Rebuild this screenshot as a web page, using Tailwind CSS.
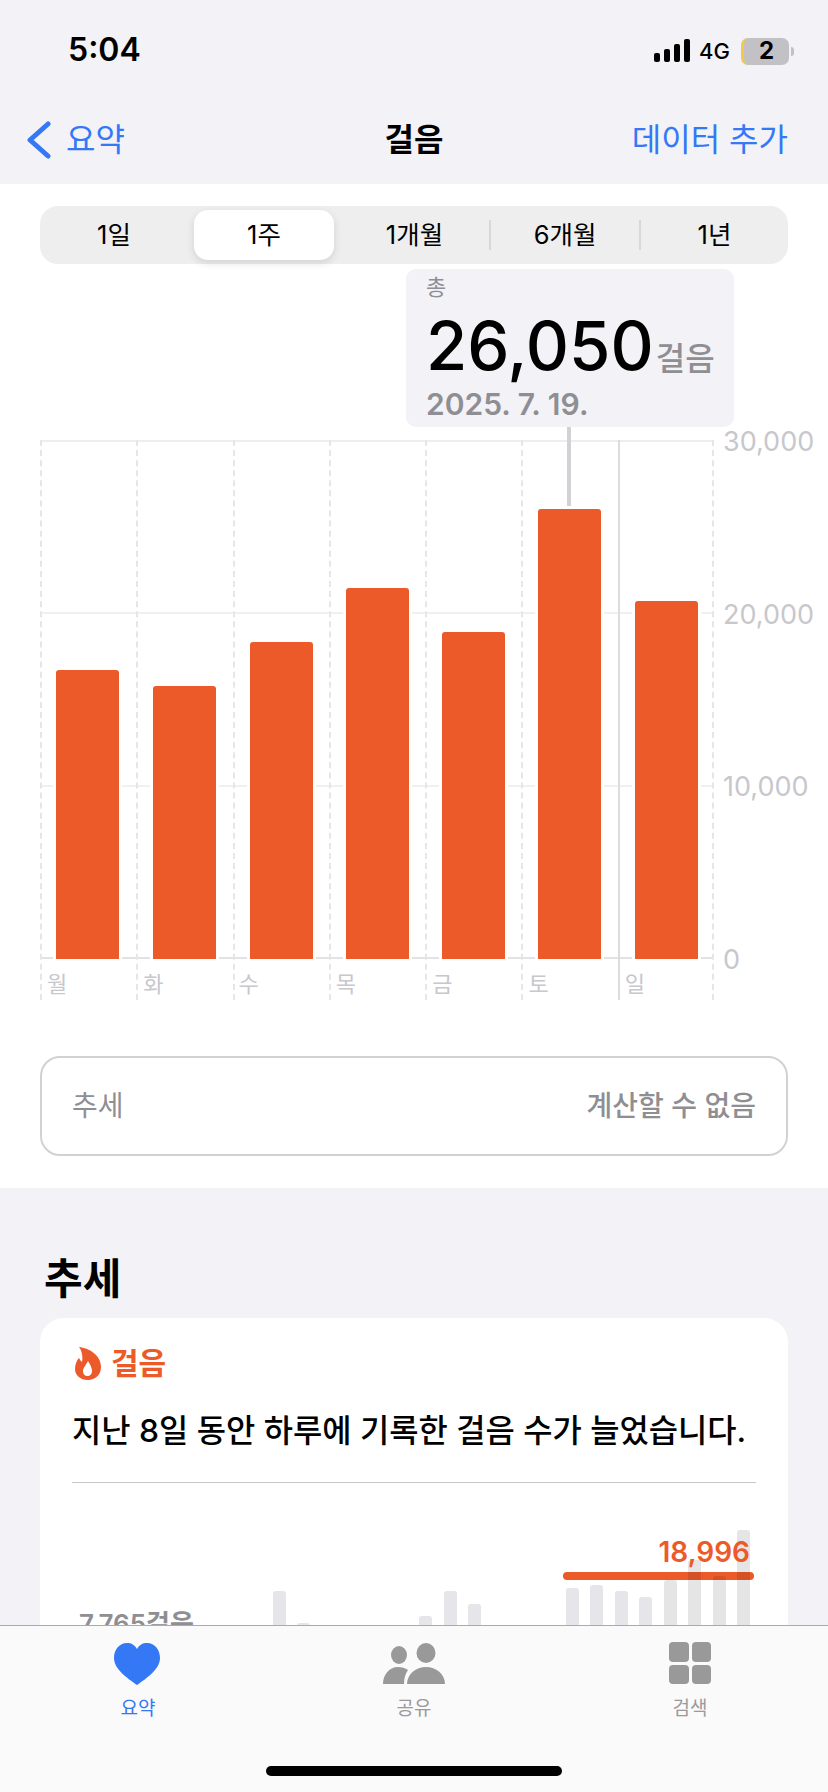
<!DOCTYPE html>
<html lang="ko">
<head>
    <meta charset="utf-8"/>
    <title>걸음</title>
    <script src="https://cdn.jsdelivr.net/npm/@tailwindcss/browser@4"></script>
</head>
<body class="bg-[#f2f2f7]">
<div class="relative w-[828px] h-[1792px] overflow-hidden bg-[#f2f2f7] text-black font-['Inter','Noto_Sans_CJK_KR',sans-serif]">

    <!-- status bar -->
    <div class="h-[100px] pt-[28px] pl-[68px] pr-[34px] flex justify-between items-start">
        <span class="text-[32px] leading-[44px] font-semibold">5:04</span>
        <div class="flex items-center h-[44px] mt-[1px]">
            <svg class="w-[38px] h-[24px]" viewBox="0 0 38 24" fill="#000">
                <rect x="1" y="14" width="6" height="9" rx="2"/>
                <rect x="11" y="10" width="6" height="13" rx="2"/>
                <rect x="21" y="5" width="6" height="18" rx="2"/>
                <rect x="31" y="0" width="6" height="23" rx="2"/>
            </svg>
            <span class="ml-[8px] text-[22px] font-medium leading-none">4G</span>
            <div class="ml-[11px] w-[48px] h-[27px] rounded-[7px] bg-[#c2c1c6] border-l-[3px] border-[#f4c94a] flex items-center justify-center text-[24px] font-bold leading-none">2</div>
            <div class="ml-[2px] w-[3px] h-[9px] rounded-r-full bg-[#c2c1c6]"></div>
        </div>
    </div>

    <!-- nav bar -->
    <div class="h-[84px] pl-[26px] pr-[40px] flex items-start justify-between relative">
        <div class="flex items-center h-[80px] text-[#3478f6]">
            <svg class="w-[25px] h-[38px]" viewBox="0 0 25 38" fill="none" stroke="#3478f6" stroke-width="5" stroke-linecap="round" stroke-linejoin="round">
                <path d="M22 3 L4 19 L22 35"/>
            </svg>
            <span class="ml-[15px] text-[32px] leading-none">요약</span>
        </div>
        <span class="absolute left-0 right-0 top-0 h-[80px] flex items-center justify-center text-[32px] font-semibold leading-none">걸음</span>
        <span class="h-[80px] flex items-center text-[32px] leading-none text-[#3478f6]">데이터 추가</span>
    </div>

    <!-- chart section -->
    <div class="h-[1004px] bg-white pt-[22px] px-[40px]">
        <div class="h-[58px] w-[748px] rounded-[18px] bg-[#eeeeef] text-[25.5px] relative">
            <span class="absolute left-0 top-0 h-full w-[148px] flex items-center justify-center">1일</span>
            <div class="absolute left-[154px] top-[4px] w-[140px] h-[50px] rounded-[14px] bg-white shadow-[0_3px_8px_rgba(0,0,0,0.12)] flex items-center justify-center">1주</div>
            <span class="absolute left-[300px] top-0 h-full w-[149px] flex items-center justify-center">1개월</span>
            <div class="absolute left-[449px] top-[14px] w-[2px] h-[30px] bg-[#d8d8da]"></div>
            <span class="absolute left-[451px] top-0 h-full w-[148px] flex items-center justify-center">6개월</span>
            <div class="absolute left-[599px] top-[14px] w-[2px] h-[30px] bg-[#d8d8da]"></div>
            <span class="absolute left-[600px] top-0 h-full w-[149px] flex items-center justify-center">1년</span>
        </div>

        <!-- chart -->
        <div class="relative h-[735px] mt-[5px]">
            <!-- tooltip -->
            <div class="absolute left-[366px] top-0 w-[328px] h-[158px] rounded-[10px] bg-[#f2f2f7] pl-[20px] z-10">
                <div class="text-[22px] leading-[22px] pt-[7px] text-[#8e8e93]">총</div>
                <div class="flex items-baseline mt-[13px] h-[70px]">
                    <span class="text-[67px] leading-[70px] font-medium">26,050</span>
                    <span class="text-[32px] font-medium leading-none text-[#8e8e93] ml-[2px]">걸음</span>
                </div>
                <div class="text-[30px] leading-[34px] mt-[6px] font-semibold text-[#8e8e93]">2025. 7. 19.</div>
            </div>
            <div class="absolute left-[527px] top-[158px] w-[4px] h-[79px] bg-[#d1d1d6] z-10"></div>

            <!-- grid lines -->
            <div class="absolute left-0 top-[171px] w-[673px] h-[519px] flex flex-col justify-between">
                <div class="h-[2px] bg-[#eeeeef]"></div>
                <div class="h-[2px] bg-[#f0f0f1]"></div>
                <div class="h-[2px] bg-[#f0f0f1]"></div>
                <div class="h-[2px] bg-[#e2e2e4]"></div>
            </div>

            <!-- columns -->
            <div class="absolute left-0 top-[171px] w-[674px] h-[560px] grid grid-cols-7">
                <div class="relative border-l-2 border-dashed border-[#e6e6e8]">
                    <div class="absolute left-[14px] bottom-[41px] w-[63px] h-[289px] bg-[#ec5a2a] rounded-t-[3px] shadow-[-3px_0_0_#fff,3px_0_0_#fff]"></div>
                    <span class="absolute left-[5px] bottom-0 text-[22px] leading-[32px] text-[#c7c7cc]">월</span>
                </div>
                <div class="relative border-l-2 border-dashed border-[#e6e6e8]">
                    <div class="absolute left-[15px] bottom-[41px] w-[63px] h-[273px] bg-[#ec5a2a] rounded-t-[3px] shadow-[-3px_0_0_#fff,3px_0_0_#fff]"></div>
                    <span class="absolute left-[5px] bottom-0 text-[22px] leading-[32px] text-[#c7c7cc]">화</span>
                </div>
                <div class="relative border-l-2 border-dashed border-[#e6e6e8]">
                    <div class="absolute left-[15px] bottom-[41px] w-[63px] h-[317px] bg-[#ec5a2a] rounded-t-[3px] shadow-[-3px_0_0_#fff,3px_0_0_#fff]"></div>
                    <span class="absolute left-[4px] bottom-0 text-[22px] leading-[32px] text-[#c7c7cc]">수</span>
                </div>
                <div class="relative border-l-2 border-dashed border-[#e6e6e8]">
                    <div class="absolute left-[15px] bottom-[41px] w-[63px] h-[371px] bg-[#ec5a2a] rounded-t-[3px] shadow-[-3px_0_0_#fff,3px_0_0_#fff]"></div>
                    <span class="absolute left-[5px] bottom-0 text-[22px] leading-[32px] text-[#c7c7cc]">목</span>
                </div>
                <div class="relative border-l-2 border-dashed border-[#e6e6e8]">
                    <div class="absolute left-[15px] bottom-[41px] w-[63px] h-[327px] bg-[#ec5a2a] rounded-t-[3px] shadow-[-3px_0_0_#fff,3px_0_0_#fff]"></div>
                    <span class="absolute left-[5px] bottom-0 text-[22px] leading-[32px] text-[#c7c7cc]">금</span>
                </div>
                <div class="relative border-l-2 border-dashed border-[#e6e6e8]">
                    <div class="absolute left-[15px] bottom-[41px] w-[63px] h-[450px] bg-[#ec5a2a] rounded-t-[3px] shadow-[-3px_0_0_#fff,3px_0_0_#fff]"></div>
                    <span class="absolute left-[5px] bottom-0 text-[22px] leading-[32px] text-[#c7c7cc]">토</span>
                </div>
                <div class="relative border-l-2 border-[#dcdcde]">
                    <div class="absolute left-[15px] bottom-[41px] w-[63px] h-[358px] bg-[#ec5a2a] rounded-t-[3px] shadow-[-3px_0_0_#fff,3px_0_0_#fff]"></div>
                    <span class="absolute left-[5px] bottom-0 text-[22px] leading-[32px] text-[#c7c7cc]">일</span>
                    <div class="absolute right-0 top-0 h-full border-r-2 border-dashed border-[#e6e6e8]"></div>
                </div>
            </div>

            <!-- y axis -->
            <div class="absolute left-[683px] top-[158px] h-[548px] flex flex-col justify-between text-[27px] leading-[30px] text-[#c7c7cc]">
                <span>30,000</span>
                <span>20,000</span>
                <span>10,000</span>
                <span>0</span>
            </div>
        </div>

        <!-- trend row -->
        <div class="mt-[52px] h-[100px] w-[748px] rounded-[20px] border-2 border-[#d1d1d6] flex items-center justify-between px-[30px] text-[28px] text-[#8e8e93]">
            <span>추세</span>
            <span class="font-medium">계산할 수 없음</span>
        </div>
    </div>

    <!-- trends section -->
    <div class="pt-[64px] px-[40px]">
        <h2 class="text-[42px] leading-[54px] font-bold pl-[4px]">추세</h2>
        <div class="mt-[12px] w-[748px] h-[500px] rounded-[24px] bg-white px-[32px] pt-[27px] relative overflow-hidden">
            <div class="flex items-center h-[36px] text-[#ec5a2a] text-[30px] font-semibold leading-none">
                <svg class="ml-[3px] w-[26px] h-[33px]" viewBox="0 0 26 33" fill="#ec5a2a">
                    <path fill-rule="evenodd" d="M4 0 C14 1 26 8 26 20 C26 28 20 33 13 33 C5 33 0 28 0 22 C0 17 2 13 4 11 C5 13 6 14 7 15 C8 10 7 4 4 0 Z M13 14 C11 18 8 21 8 24 C8 27 10 29 12.500 29 C15 29 17 27 17 24 C17 21 15 17 13 14 Z"/>
                </svg>
                <span class="ml-[10px]">걸음</span>
            </div>
            <p class="mt-[28px] text-[31.8px] leading-[44px] font-medium whitespace-nowrap">지난 8일 동안 하루에 기록한 걸음 수가 늘었습니다.</p>
            <div class="mt-[29px] h-[1px] bg-[#c6c6c8]"></div>

            <!-- mini chart -->
            <div class="relative h-[160px]">
                <div class="absolute left-[201px] bottom-0 w-[13px] h-[52px] rounded-t-[3px] bg-[#e5e5ea]"></div>
                <div class="absolute left-[225px] bottom-0 w-[13px] h-[20px] rounded-t-[3px] bg-[#e5e5ea]"></div>
                <div class="absolute left-[347px] bottom-0 w-[13px] h-[27px] rounded-t-[3px] bg-[#e5e5ea]"></div>
                <div class="absolute left-[372px] bottom-0 w-[13px] h-[52px] rounded-t-[3px] bg-[#e5e5ea]"></div>
                <div class="absolute left-[396px] bottom-0 w-[13px] h-[39px] rounded-t-[3px] bg-[#e5e5ea]"></div>
                <div class="absolute left-[491px] top-[89px] w-[191px] h-[8px] rounded-full bg-[#ec5a2a]"></div>
                <div class="absolute left-[494px] bottom-0 w-[13px] h-[55px] rounded-t-[3px] bg-[#e5e5ea]"></div>
                <div class="absolute left-[518px] bottom-0 w-[13px] h-[58px] rounded-t-[3px] bg-[#e5e5ea]"></div>
                <div class="absolute left-[543px] bottom-0 w-[13px] h-[52px] rounded-t-[3px] bg-[#e5e5ea]"></div>
                <div class="absolute left-[567px] bottom-0 w-[13px] h-[46px] rounded-t-[3px] bg-[#e5e5ea]"></div>
                <div class="absolute left-[592px] bottom-0 w-[13px] h-[63px] rounded-t-[3px] bg-black/10"></div>
                <div class="absolute left-[616px] bottom-0 w-[13px] h-[83px] rounded-t-[3px] bg-black/10"></div>
                <div class="absolute left-[641px] bottom-0 w-[13px] h-[67px] rounded-t-[3px] bg-black/10"></div>
                <div class="absolute left-[665px] bottom-0 w-[13px] h-[113px] rounded-t-[3px] bg-black/10"></div>
                <span class="absolute right-[6px] top-[53px] text-[28px] leading-[32px] font-semibold text-[#ec5a2a]">18,996</span>
                <span class="absolute left-[7px] top-[125px] text-[26px] leading-[32px] font-semibold text-[#8e8e93] whitespace-nowrap">7,765걸음</span>
            </div>
        </div>
    </div>

    <!-- tab bar -->
    <div class="absolute left-0 bottom-0 w-full h-[167px] bg-[#fafafa] border-t border-[#aaaaaa] grid grid-cols-3 text-[19px] text-[#9a9a9a]">
        <div class="flex flex-col items-center pt-[17px]">
            <svg class="-ml-[2px] w-[46px] h-[42px]" viewBox="0 0 46 42" fill="#3478f6">
                <path d="M23 6 C20 1 17 0 13 0 C5 0 0 7 0 15 C0 26 13 35 23 42 C33 35 46 26 46 15 C46 7 41 0 33 0 C29 0 26 1 23 6 Z"/>
            </svg>
            <span class="mt-[12px] leading-[24px] text-[#3478f6]">요약</span>
        </div>
        <div class="flex flex-col items-center pt-[17px]">
            <svg class="w-[62px] h-[42px]" viewBox="0 0 62 42" fill="#999999">
                <ellipse cx="16" cy="12" rx="8" ry="9"/>
                <ellipse cx="43" cy="10" rx="9.500" ry="10"/>
                <path d="M0 41 C0 32 6 24 15 24 C19 24 22 25 25 27 C22 31 21 36 21 41 Z"/>
                <path d="M24 41 C24 31 33 24 43 24 C53 24 62 31 62 41 Z"/>
            </svg>
            <span class="mt-[12px] leading-[24px]">공유</span>
        </div>
        <div class="flex flex-col items-center pt-[16px]">
            <div class="w-[42px] h-[42px] grid grid-cols-2 gap-[3px]">
                <div class="rounded-[4px] bg-[#999999]"></div>
                <div class="rounded-[4px] bg-[#999999]"></div>
                <div class="rounded-[4px] bg-[#999999]"></div>
                <div class="rounded-[4px] bg-[#999999]"></div>
            </div>
            <span class="mt-[13px] leading-[24px]">검색</span>
        </div>
        <div class="absolute left-[266px] bottom-[16px] w-[296px] h-[10px] rounded-full bg-black"></div>
    </div>
</div>
</body>
</html>
